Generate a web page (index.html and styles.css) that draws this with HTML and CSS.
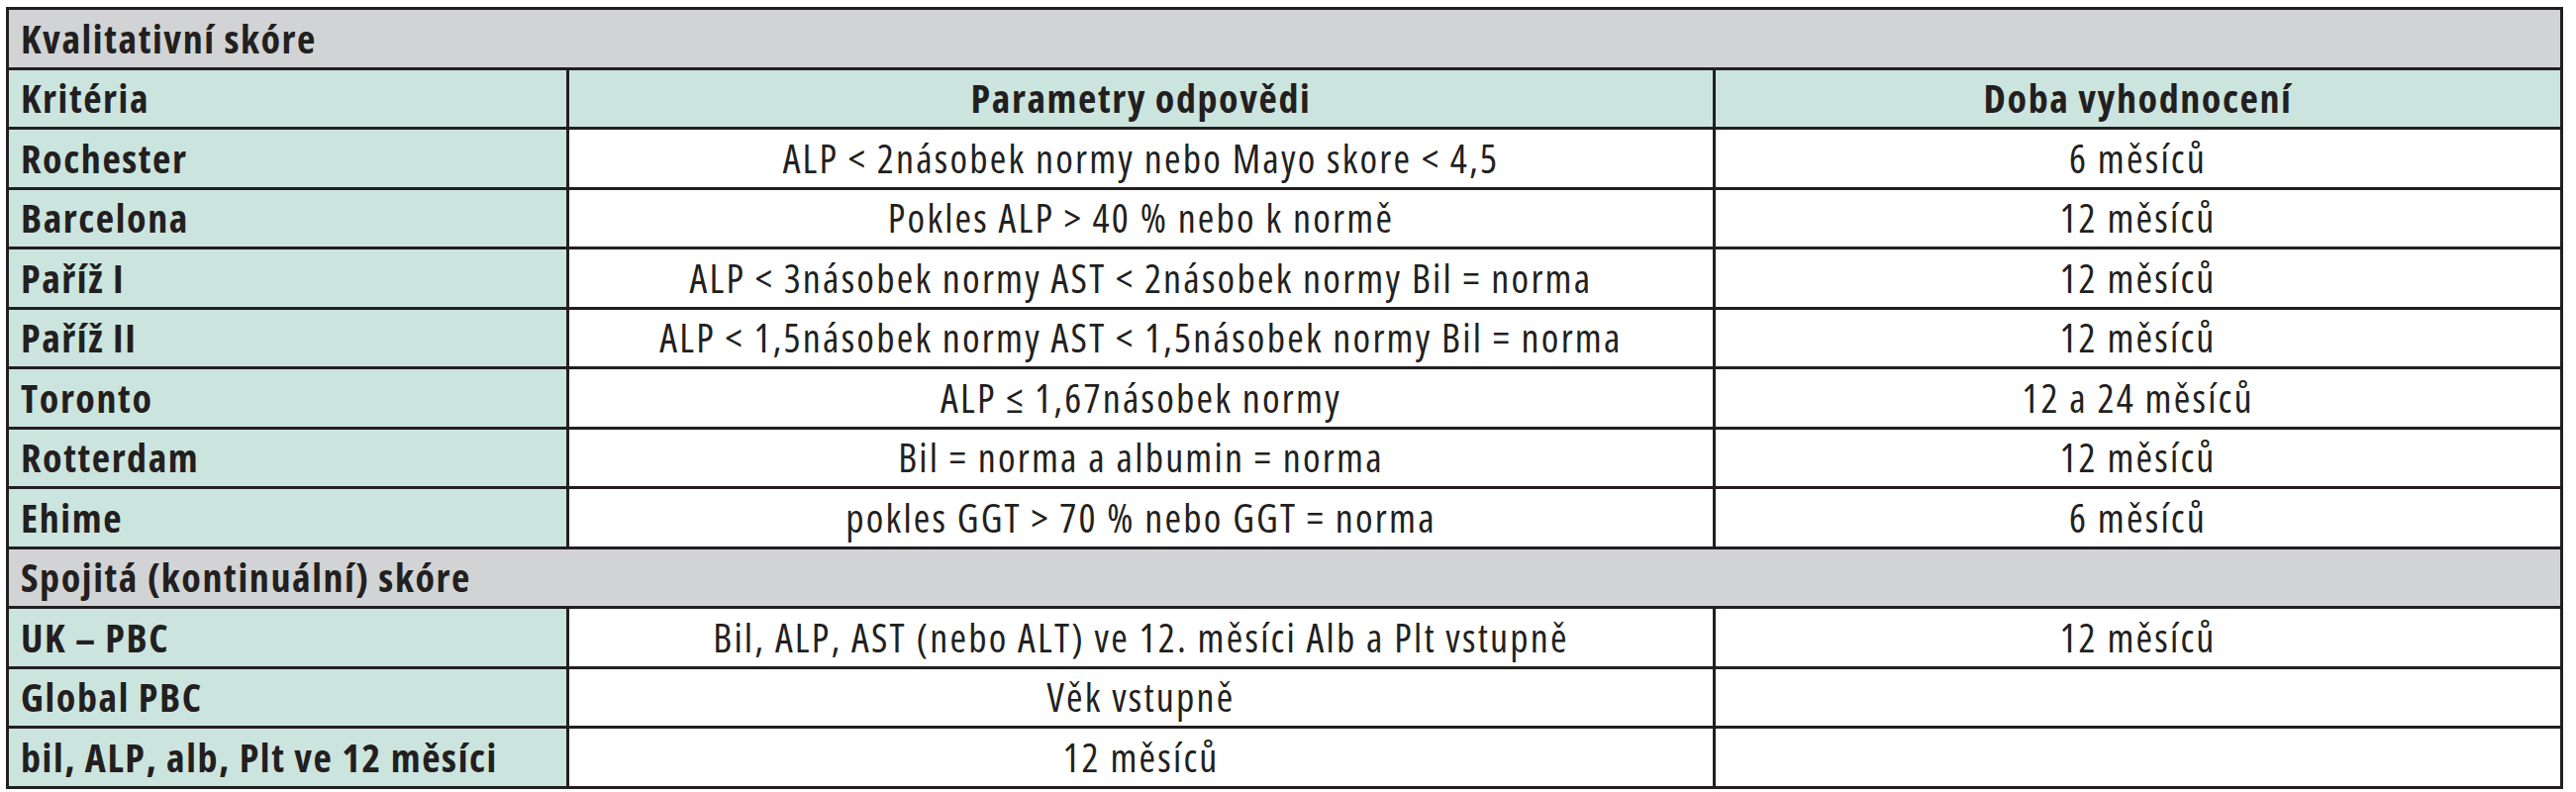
FILE: index.html
```html
<!DOCTYPE html>
<html lang="cs">
<head>
<meta charset="utf-8">
<title>Kvalitativní skóre</title>
<link rel="stylesheet" href="styles.css">
</head>
<body>
<table class="score">
  <colgroup>
    <col class="c1">
    <col class="c2">
    <col class="c3">
  </colgroup>
  <tbody>
    <tr class="section"><td colspan="3">Kvalitativní skóre</td></tr>
    <tr class="head"><td class="label">Kritéria</td><td>Parametry odpovědi</td><td>Doba vyhodnocení</td></tr>
    <tr><td class="label">Rochester</td><td>ALP &lt; 2násobek normy nebo Mayo skore &lt; 4,5</td><td>6 měsíců</td></tr>
    <tr><td class="label">Barcelona</td><td>Pokles ALP &gt; 40 % nebo k normě</td><td>12 měsíců</td></tr>
    <tr><td class="label">Paříž I</td><td>ALP &lt; 3násobek normy AST &lt; 2násobek normy Bil = norma</td><td>12 měsíců</td></tr>
    <tr><td class="label">Paříž II</td><td>ALP &lt; 1,5násobek normy AST &lt; 1,5násobek normy Bil = norma</td><td>12 měsíců</td></tr>
    <tr><td class="label">Toronto</td><td>ALP ≤ 1,67násobek normy</td><td>12 a 24 měsíců</td></tr>
    <tr><td class="label">Rotterdam</td><td>Bil = norma a albumin = norma</td><td>12 měsíců</td></tr>
    <tr><td class="label">Ehime</td><td>pokles GGT &gt; 70 % nebo GGT = norma</td><td>6 měsíců</td></tr>
    <tr class="section"><td colspan="3">Spojitá (kontinuální) skóre</td></tr>
    <tr><td class="label">UK – PBC</td><td>Bil, ALP, AST (nebo ALT) ve 12. měsíci Alb a Plt vstupně</td><td>12 měsíců</td></tr>
    <tr><td class="label">Global PBC</td><td>Věk vstupně</td><td></td></tr>
    <tr><td class="label">bil, ALP, alb, Plt ve 12 měsíci</td><td>12 měsíců</td><td></td></tr>
  </tbody>
</table>
</body>
</html>
```
FILE: styles.css
```css
html, body {
  margin: 0;
  padding: 0;
  background: #ffffff;
}
body {
  padding: 7px 0 0 6px;
  font-family: "Open Sans", "Liberation Sans", sans-serif;
  color: #231f20;
}
.score {
  border-collapse: collapse;
  width: 2580px;
  table-layout: fixed;
  font-size: 40px;
  line-height: 1;
  font-stretch: condensed;
  letter-spacing: 2.2px;
}
.c1 { width: 566px; }
.c2 { width: 1158px; }
.c3 { width: 856px; }
.score td {
  border: 3px solid #231f20;
  height: 57.5px;
  padding: 0 12px;
  text-align: center;
  vertical-align: middle;
  background: #ffffff;
  white-space: nowrap;
  overflow: hidden;
}
.score td.label {
  text-align: left;
  font-weight: bold;
  letter-spacing: 1.6px;
  background: #cce4de;
}
.score .head td {
  background: #cce4de;
  font-weight: bold;
  letter-spacing: 1.6px;
}
.score .section td {
  background: #d1d3d4;
  font-weight: bold;
  letter-spacing: 1.6px;
  text-align: left;
}
```
